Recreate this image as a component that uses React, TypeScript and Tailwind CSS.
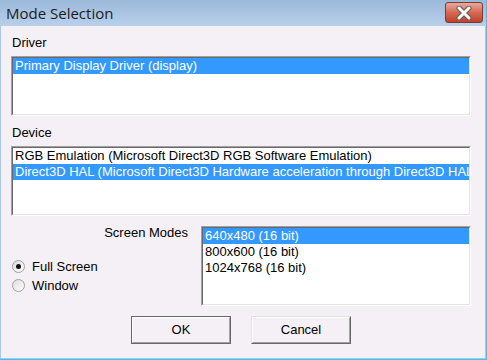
const listFont = { fontFamily: '"Liberation Sans", Arial, sans-serif' };

interface ListBoxProps {
  items: string[];
  selected: number;
  className: string;
}

function ListBox({ items, selected, className }: ListBoxProps) {
  return (
    <div className={`border-t border-l border-[#a0a0a0] border-r border-b border-r-white border-b-white ${className}`}>
      <div className="h-full border-t border-l border-[#696969] border-r border-b border-r-[#e3e3e3] border-b-[#e3e3e3] bg-white overflow-hidden">
        {items.map((item, i) => (
          <div
            key={item}
            className={`h-[16px] leading-[16px] pl-[2px] whitespace-nowrap text-[13px] ${
              i === selected ? 'bg-[#3399ff] text-white' : 'text-black'
            }`}
          >
            {item}
          </div>
        ))}
      </div>
    </div>
  );
}

function Radio({ checked, label, id }: { checked: boolean; label: string; id: string }) {
  return (
    <div className="flex items-center h-[19px]">
      <svg width="13" height="13" viewBox="0 0 13 13" className="ml-[1px]">
        <defs>
          <linearGradient id={id} x1="0" y1="0" x2="1" y2="1">
            <stop offset="0" stopColor="#dcdcdc" />
            <stop offset="1" stopColor="#ffffff" />
          </linearGradient>
        </defs>
        <circle cx="6.5" cy="6.5" r="6" fill={`url(#${id})`} stroke="#a0a0a0" strokeWidth="1" />
        {checked && <circle cx="6.5" cy="6.5" r="2.5" fill="#111111" />}
      </svg>
      <span className="ml-[7px] text-[13px] text-black">{label}</span>
    </div>
  );
}

function DialogButton({ label, isDefault }: { label: string; isDefault?: boolean }) {
  if (isDefault) {
    return (
      <div className="w-[100px] h-[28px] border border-[#696969]">
        <div className="h-full border-t border-l border-white border-r border-b border-r-[#a0a0a0] border-b-[#a0a0a0] flex items-center justify-center text-[13px] text-black">
          {label}
        </div>
      </div>
    );
  }
  return (
    <div className="w-[100px] h-[28px] border-t border-l border-[#e3e3e3] border-r border-b border-r-[#696969] border-b-[#696969]">
      <div className="h-full border-t border-l border-white border-r border-b border-r-[#a0a0a0] border-b-[#a0a0a0] flex items-center justify-center text-[13px] text-black">
        {label}
      </div>
    </div>
  );
}

export default function App() {
  return (
    <div className="w-[487px] h-[360px] flex flex-col bg-[#aac7e8] border-r border-b border-[#3ac5ef]">
      <div className="h-[26px] flex items-start bg-gradient-to-b from-[#9cb9da] to-[#b8d0ea]">
        <span
          className="ml-[6px] mt-[3px] text-[15px] leading-[20px] text-[#1b1b1b]"
          style={{ fontFamily: '"Open Sans", "Noto Sans", sans-serif' }}
        >
          Mode Selection
        </span>
        <div className="ml-auto mr-[3px] mt-[2px] w-[38px] h-[21px] rounded-[3px] border border-[#7b3b33] bg-gradient-to-b from-[#e9a99a] via-[#d46a53] to-[#c2402b] flex items-center justify-center">
          <svg width="16" height="14" viewBox="0 0 16 14">
            <path d="M3 2 L13 12 M13 2 L3 12" stroke="#5a5a5a" strokeWidth="5" strokeLinecap="round" />
            <path d="M3 2 L13 12 M13 2 L3 12" stroke="#ffffff" strokeWidth="3" strokeLinecap="round" />
          </svg>
        </div>
      </div>

      <div className="flex-1 ml-[1px] mr-[1px] mb-[1px] bg-[#f5f0f5] pl-[10px] pt-[9px] flex flex-col" style={listFont}>
        <div className="text-[13px] leading-[16px] text-black pl-[1px]">Driver</div>
        <ListBox
          className="mt-[5px] w-[460px] h-[60px]"
          items={['Primary Display Driver (display)']}
          selected={0}
        />

        <div className="mt-[9px] text-[13px] leading-[16px] text-black pl-[1px]">Device</div>
        <ListBox
          className="mt-[5px] w-[460px] h-[70px]"
          items={[
            'RGB Emulation (Microsoft Direct3D RGB Software Emulation)',
            'Direct3D HAL (Microsoft Direct3D Hardware acceleration through Direct3D HAL)',
          ]}
          selected={1}
        />

        <div className="mt-[10px] flex">
          <div className="w-[190px] flex flex-col">
            <div className="-mt-[1px] text-right pr-[13px] text-[13px] leading-[16px] text-black">Screen Modes</div>
            <div className="mt-[16px] flex flex-col">
              <Radio checked label="Full Screen" id="radio-full" />
              <Radio checked={false} label="Window" id="radio-window" />
            </div>
          </div>
          <ListBox
            className="w-[270px] h-[80px]"
            items={['640x480 (16 bit)', '800x600 (16 bit)', '1024x768 (16 bit)']}
            selected={0}
          />
        </div>

        <div className="mt-[10px] flex gap-[20px] pl-[120px]">
          <DialogButton label="OK" isDefault />
          <DialogButton label="Cancel" />
        </div>
      </div>
    </div>
  );
}
